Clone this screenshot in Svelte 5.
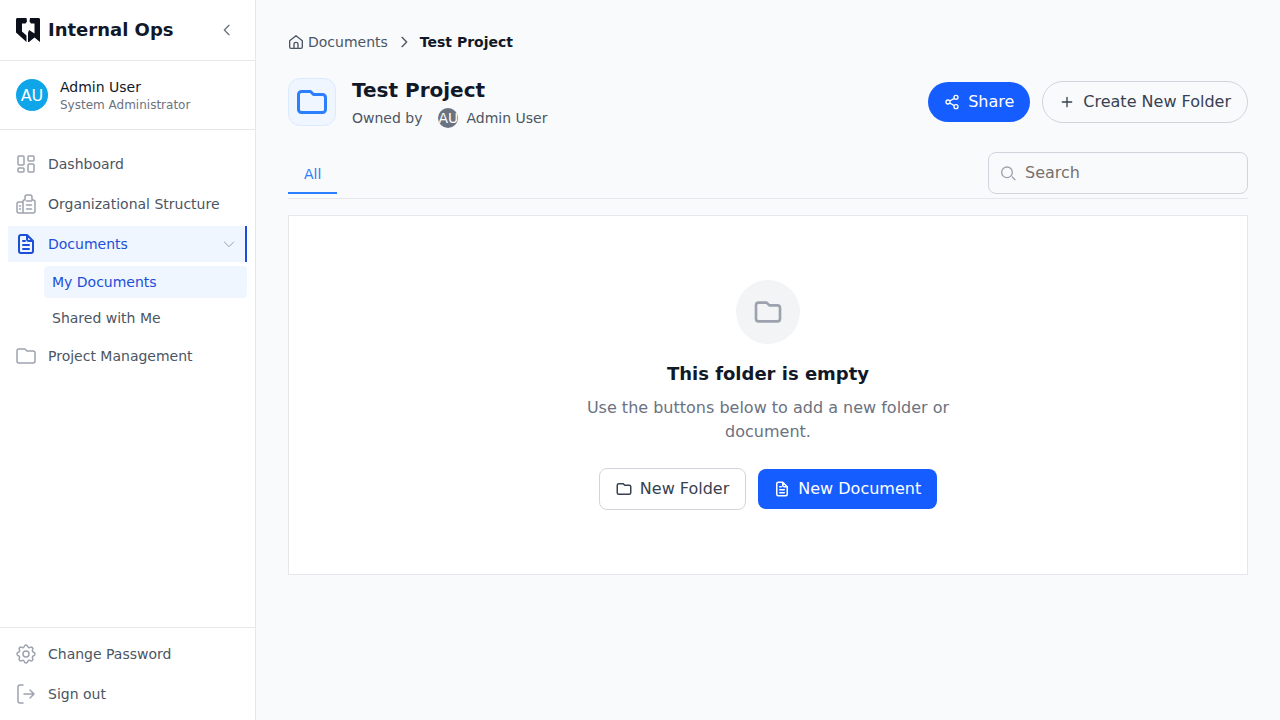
<script>
  const paths = {
    grid: 'M5 4h4a1 1 0 011 1v7a1 1 0 01-1 1H5a1 1 0 01-1-1V5a1 1 0 011-1zM15 4h4a1 1 0 011 1v3a1 1 0 01-1 1h-4a1 1 0 01-1-1V5a1 1 0 011-1zM15 12h4a1 1 0 011 1v6a1 1 0 01-1 1h-4a1 1 0 01-1-1v-6a1 1 0 011-1zM5 16h4a1 1 0 011 1v2a1 1 0 01-1 1H5a1 1 0 01-1-1v-2a1 1 0 011-1z',
    building: 'M9 21V9a1 1 0 011-1h1V5a2 2 0 012-2h3a2 2 0 012 2v3h1a2 2 0 012 2v9a2 2 0 01-2 2zM9 10H5a2 2 0 00-2 2v7a2 2 0 002 2h4M12.500 9h5M12.500 13h5M12.500 17h5M5.500 14h1M5.500 17h1',
    doc: 'M7 3h6l6 6v10a2 2 0 01-2 2H7a2 2 0 01-2-2V5a2 2 0 012-2zM13 3v4a2 2 0 002 2h4M9 9h2M9 13h6M9 17h6',
    folder: 'M3 7v10a2 2 0 002 2h14a2 2 0 002-2V9a2 2 0 00-2-2h-6l-2-2H5a2 2 0 00-2 2z',
    chevronDown: 'M19 9l-7 7-7-7',
    chevronLeft: 'M15 19l-7-7 7-7',
    chevronRight: 'M9 5l7 7-7 7',
    cog: 'M10.325 4.317c.426-1.756 2.924-1.756 3.35 0a1.724 1.724 0 002.573 1.066c1.543-.94 3.31.826 2.37 2.37a1.724 1.724 0 001.065 2.572c1.756.426 1.756 2.924 0 3.35a1.724 1.724 0 00-1.066 2.573c.94 1.543-.826 3.31-2.37 2.37a1.724 1.724 0 00-2.572 1.065c-.426 1.756-2.924 1.756-3.35 0a1.724 1.724 0 00-2.573-1.066c-1.543.94-3.31-.826-2.37-2.37a1.724 1.724 0 00-1.065-2.572c-1.756-.426-1.756-2.924 0-3.35a1.724 1.724 0 001.066-2.573c-.94-1.543.826-3.31 2.37-2.37.996.608 2.296.07 2.572-1.065zM15 12a3 3 0 11-6 0 3 3 0 016 0z',
    signout: 'M9 3H6a2 2 0 00-2 2v14a2 2 0 002 2h3M10 12h10M16 8l4 4-4 4',
    home: 'M2.500 10L12 2.500 21.500 10v9.500a2 2 0 01-2 2h-15a2 2 0 01-2-2zM9 21.500v-6a3 3 0 016 0v6',
    share: 'M8.600 10.500l6.800-4M8.600 13.500l6.800 4M9 12a3 3 0 11-6 0 3 3 0 016 0zM21 5a3 3 0 11-6 0 3 3 0 016 0zM21 19a3 3 0 11-6 0 3 3 0 016 0z',
    plus: 'M12 5v14M5 12h14',
    search: 'M21 22l-4-4M17 11a8 8 0 11-16 0 8 8 0 0116 0z'
  };
</script>

{#snippet icon(name, size, stroke = 1.5)}
  <svg class="icon" width={size} height={size} viewBox="0 0 24 24" fill="none" stroke="currentColor" stroke-width={stroke} stroke-linecap="round" stroke-linejoin="round">
    <path d={paths[name]} />
  </svg>
{/snippet}

<div class="layout">
  <aside class="sidebar">
    <div class="brand">
      <div class="brand-left">
        <svg width="24" height="24" viewBox="0 0 24 24" fill="#0b0f19">
          <path d="M1 0H10.500L11 3.500 9.500 5.500H6V13.500L10.500 17.500V24L0 14.500V1zM14 0H23L24 1V15.500H18.500V5.500H15L13.500 3.500zM13 12L18.500 15.500H24V24L18.500 19.500 13 24H12V15z" />
        </svg>
        <span class="brand-name">Internal Ops</span>
      </div>
      <span class="collapse">{@render icon('chevronLeft', 16, 2)}</span>
    </div>

    <div class="user">
      <div class="avatar">AU</div>
      <div>
        <div class="user-name">Admin User</div>
        <div class="user-role">System Administrator</div>
      </div>
    </div>

    <nav class="nav">
      <a class="item">{@render icon('grid', 24)}<span>Dashboard</span></a>
      <a class="item">{@render icon('building', 24)}<span>Organizational Structure</span></a>
      <a class="item active">{@render icon('doc', 24, 2)}<span>Documents</span><span class="caret">{@render icon('chevronDown', 16)}</span></a>
      <a class="sub current">My Documents</a>
      <a class="sub">Shared with Me</a>
      <a class="item">{@render icon('folder', 24)}<span>Project Management</span></a>
    </nav>

    <div class="foot">
      <a class="item">{@render icon('cog', 24)}<span>Change Password</span></a>
      <a class="item">{@render icon('signout', 24)}<span>Sign out</span></a>
    </div>
  </aside>

  <main class="main">
    <div class="crumbs">
      <span class="crumb-home">{@render icon('home', 16, 2)}Documents</span>
      <span class="crumb-sep">{@render icon('chevronRight', 16, 2)}</span>
      <strong>Test Project</strong>
    </div>

    <header class="head">
      <div class="head-left">
        <div class="head-icon">{@render icon('folder', 36, 2)}</div>
        <div>
          <h1>Test Project</h1>
          <div class="owner">
            <span>Owned by</span>
            <span class="owner-av">AU</span>
            <span>Admin User</span>
          </div>
        </div>
      </div>
      <div class="head-actions">
        <button class="btn primary pill">{@render icon('share', 16, 2)}Share</button>
        <button class="btn outline pill">{@render icon('plus', 16, 2)}Create New Folder</button>
      </div>
    </header>

    <div class="tabs">
      <div class="tab">All</div>
      <div class="search">{@render icon('search', 16, 2)}<span>Search</span></div>
    </div>

    <section class="card">
      <div class="empty-circle">{@render icon('folder', 32, 2)}</div>
      <h2>This folder is empty</h2>
      <p>Use the buttons below to add a new folder or document.</p>
      <div class="card-actions">
        <button class="btn outline white tight">{@render icon('folder', 18, 2)}New Folder</button>
        <button class="btn primary tight">{@render icon('doc', 18, 2)}New Document</button>
      </div>
    </section>
  </main>
</div>

<style>
  :global(body) {
    font-family: "DejaVu Sans", sans-serif;
    background: #f9fafb;
  }
  .layout {
    display: flex;
    height: 720px;
    overflow: hidden;
  }
  .icon {
    flex-shrink: 0;
    display: block;
  }

  .sidebar {
    width: 255px;
    flex-shrink: 0;
    display: flex;
    flex-direction: column;
    background: #fff;
    border-right: 1px solid #e5e7eb;
  }
  .brand {
    height: 60px;
    display: flex;
    align-items: center;
    justify-content: space-between;
    padding: 0 20px 0 16px;
    border-bottom: 1px solid #e5e7eb;
  }
  .brand-left {
    display: flex;
    align-items: center;
    gap: 8px;
  }
  .brand-name {
    font-size: 18px;
    line-height: 28px;
    font-weight: 700;
    color: #111827;
  }
  .collapse {
    color: #6b7280;
  }
  .user {
    height: 68px;
    display: flex;
    align-items: center;
    gap: 12px;
    padding: 0 16px;
    border-bottom: 1px solid #e5e7eb;
  }
  .avatar {
    width: 32px;
    height: 32px;
    border-radius: 50%;
    background: #0ea5e9;
    color: #fff;
    font-size: 16px;
    display: flex;
    align-items: center;
    justify-content: center;
  }
  .user-name {
    font-size: 14px;
    line-height: 20px;
    color: #111827;
  }
  .user-role {
    font-size: 12px;
    line-height: 16px;
    color: #6b7280;
  }
  .nav {
    flex: 1;
    display: flex;
    flex-direction: column;
    gap: 4px;
    padding: 16px 8px;
  }
  .item {
    height: 36px;
    display: flex;
    align-items: center;
    gap: 10px;
    padding: 0 6px;
    font-size: 14px;
    color: #4b5563;
  }
  .item :global(.icon) {
    color: #9ca3af;
  }
  .item.active {
    background: #eff6ff;
    color: #1d4ed8;
    border-right: 2px solid #1d4ed8;
  }
  .item.active > :global(.icon) {
    color: #1d4ed8;
  }
  .caret {
    margin-left: auto;
    margin-right: 2px;
  }
  .sub {
    height: 32px;
    display: flex;
    align-items: center;
    margin-left: 36px;
    padding: 0 8px;
    font-size: 14px;
    color: #4b5563;
    border-radius: 4px;
  }
  .sub.current {
    background: #eff6ff;
    color: #1d4ed8;
  }
  .foot {
    display: flex;
    flex-direction: column;
    gap: 4px;
    padding: 8px;
    border-top: 1px solid #e5e7eb;
  }

  .main {
    flex: 1;
    min-width: 0;
    padding: 32px;
  }
  .crumbs {
    height: 20px;
    display: flex;
    align-items: center;
    font-size: 14px;
    color: #4b5563;
    margin-bottom: 26px;
  }
  .crumb-home {
    display: flex;
    align-items: center;
    gap: 4px;
  }
  .crumb-sep {
    margin: 0 8px;
    color: #4b5563;
  }
  .crumbs strong {
    color: #111827;
  }
  .head {
    display: flex;
    align-items: flex-start;
    justify-content: space-between;
    margin-bottom: 24px;
  }
  .head-left {
    display: flex;
    align-items: flex-start;
    gap: 16px;
  }
  .head-icon {
    width: 48px;
    height: 48px;
    box-sizing: border-box;
    display: flex;
    align-items: center;
    justify-content: center;
    border-radius: 12px;
    background: #eff6ff;
    border: 1px solid #dbeafe;
    color: #2b7fff;
  }
  h1 {
    margin: 0 0 6px;
    font-size: 20px;
    line-height: 24px;
    font-weight: 700;
    color: #111827;
  }
  .owner {
    display: flex;
    align-items: center;
    font-size: 14px;
    line-height: 20px;
    color: #4b5563;
  }
  .owner-av {
    width: 20px;
    height: 20px;
    margin: 0 8px 0 16px;
    border-radius: 50%;
    background: #6b7280;
    color: #fff;
    overflow: hidden;
    display: flex;
    align-items: center;
    justify-content: center;
  }
  .head-actions {
    height: 48px;
    display: flex;
    align-items: center;
    gap: 12px;
  }
  .btn {
    display: flex;
    align-items: center;
    gap: 8px;
    height: 42px;
    box-sizing: border-box;
    padding: 0 16px;
    font-family: inherit;
    font-size: 16px;
    line-height: 24px;
    border-radius: 8px;
    border: none;
  }
  .btn.tight {
    gap: 7px;
    padding-left: 15px;
  }
  .primary {
    height: 40px;
    background: #165dff;
    color: #fff;
  }
  .outline {
    background: transparent;
    border: 1px solid #d1d5db;
    color: #374151;
  }
  .outline.white {
    background: #fff;
  }
  .pill {
    border-radius: 21px;
  }
  .tabs {
    display: flex;
    align-items: flex-end;
    justify-content: space-between;
    padding-bottom: 4px;
    border-bottom: 1px solid #e5e7eb;
    margin-bottom: 16px;
  }
  .tab {
    padding: 0 16px 8px;
    font-size: 14px;
    line-height: 20px;
    color: #2b7fff;
    border-bottom: 2px solid #2b7fff;
  }
  .search {
    width: 260px;
    height: 42px;
    box-sizing: border-box;
    display: flex;
    align-items: center;
    gap: 8px;
    padding: 0 12px;
    background: #f9fafb;
    border: 1px solid #d1d5db;
    border-radius: 8px;
    font-size: 16px;
    line-height: 24px;
    color: #78716c;
  }
  .search :global(.icon) {
    color: #9ca3af;
  }
  .card {
    display: flex;
    flex-direction: column;
    align-items: center;
    padding: 64px 0;
    background: #fff;
    border: 1px solid #e5e7eb;
  }
  .empty-circle {
    width: 64px;
    height: 64px;
    margin-bottom: 16px;
    border-radius: 50%;
    background: #f3f4f6;
    color: #9ca3af;
    display: flex;
    align-items: center;
    justify-content: center;
  }
  h2 {
    margin: 0 0 8px;
    font-size: 18px;
    line-height: 28px;
    font-weight: 700;
    color: #111827;
  }
  p {
    margin: 0 0 24px;
    max-width: 384px;
    font-size: 16px;
    line-height: 24px;
    color: #6b7280;
    text-align: center;
  }
  .card-actions {
    display: flex;
    align-items: center;
    gap: 12px;
  }
</style>
